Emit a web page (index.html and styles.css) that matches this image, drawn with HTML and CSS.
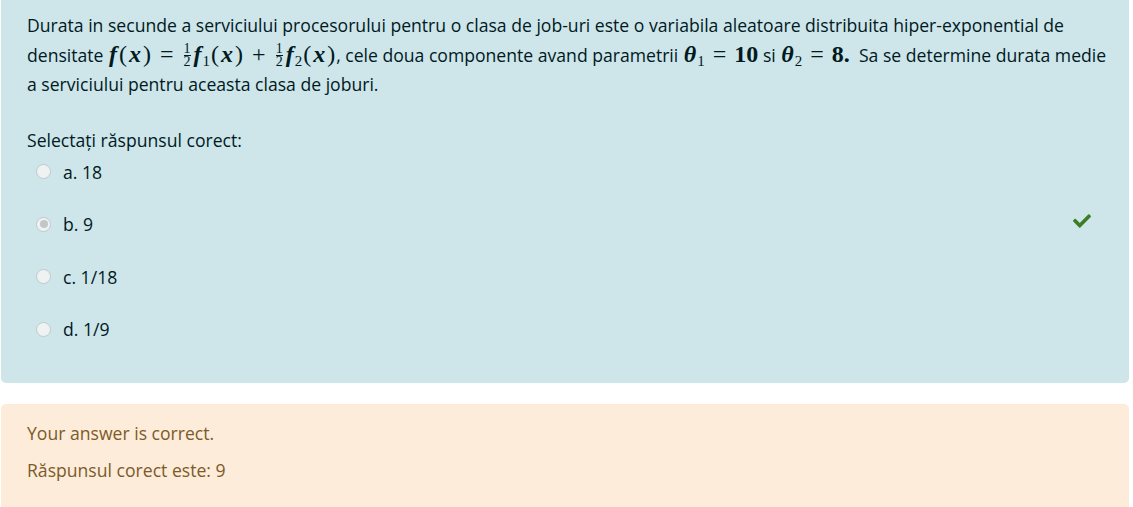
FILE: index.html
```html
<!DOCTYPE html>
<html lang="ro">
<head>
<meta charset="utf-8">
<title>Întrebare</title>
<link rel="stylesheet" href="styles.css">
</head>
<body>
<div class="que">
  <div class="formulation">
    <div class="qtext">
      Durata in secunde a serviciului procesorului pentru o clasa de job-uri este o variabila aleatoare distribuita hiper-exponential de densitate
      <span class="math"><i>f</i><span class="p">(</span><i>x</i><span class="p">)</span><span class="op">=</span><span class="frac"><span>1</span><span class="den">2</span></span><i>f</i><sub>1</sub><span class="p">(</span><i>x</i><span class="p">)</span><span class="op">+</span><span class="frac"><span>1</span><span class="den">2</span></span><i>f</i><sub>2</sub><span class="p">(</span><i>x</i><span class="p">)</span></span>, cele doua componente avand parametrii <span class="math"><i>θ</i><sub>1</sub><span class="op">=</span><b>10</b></span> si <span class="math"><i>θ</i><sub>2</sub><span class="op">=</span><b>8.</b></span>&nbsp; Sa se determine durata medie a serviciului pentru aceasta clasa de joburi.
    </div>
    <div class="ablock">
      <div class="prompt">Selectați răspunsul corect:</div>
      <div class="answer">
        <div class="option"><span class="radio"></span><span class="label">a. 18</span></div>
        <div class="option correct"><span class="radio checked"></span><span class="label">b. 9</span>
          <svg class="tick" viewBox="0 0 512 512" width="18" height="18"><path fill="#3d7d25" d="M173.9 439.4l-166.4-166.4c-10-10-10-26.2 0-36.2l36.2-36.2c10-10 26.2-10 36.2 0L192 312.7 432.1 72.6c10-10 26.2-10 36.2 0l36.2 36.2c10 10 10 26.2 0 36.2L210.1 439.4c-10 10-26.2 10-36.2 0z"/></svg>
        </div>
        <div class="option"><span class="radio"></span><span class="label">c. 1/18</span></div>
        <div class="option"><span class="radio"></span><span class="label">d. 1/9</span></div>
      </div>
    </div>
  </div>
  <div class="outcome">
    <div class="feedback">Your answer is correct.</div>
    <div class="rightanswer">Răspunsul corect este: 9</div>
  </div>
</div>
</body>
</html>
```
FILE: styles.css
```css
html, body {
  margin: 0;
  padding: 0;
  background: #ffffff;
}
body {
  font-family: "Open Sans", "Noto Sans", sans-serif;
  font-size: 17.6px;
  color: #001a1e;
}
.que {
  padding: 0 4px 0 1px;
}
.formulation {
  background: #cee5ea;
  border-radius: 0 0 5px 5px;
  padding: 11px 20px 22px 26px;
  height: 350px;
}
.qtext {
  line-height: 29.5px;
  margin-bottom: 28px;
}
.math {
  font-family: "Liberation Serif", "DejaVu Serif", serif;
  font-size: 24px;
  line-height: 1;
  white-space: nowrap;
}
.math i {
  font-style: italic;
  font-weight: bold;
  padding: 0 1px;
}
.math b {
  font-weight: bold;
}
.math .p {
  padding: 0 1px;
}
.math sub {
  font-size: 15px;
  vertical-align: -4px;
  line-height: 0;
}
.math .op {
  padding: 0 8px;
}
.frac {
  display: inline-flex;
  flex-direction: column;
  align-items: center;
  font-size: 14px;
  line-height: 12px;
  vertical-align: 9px;
  padding: 0 2px;
}
.frac .den {
  border-top: 1px solid #001a1e;
}
.prompt {
  margin-bottom: 9px;
}
.answer {
  display: flex;
  flex-direction: column;
}
.option {
  display: flex;
  align-items: center;
  height: 22px;
  margin-bottom: 30.5px;
  padding-left: 9px;
}
.radio {
  width: 13px;
  height: 13px;
  border-radius: 50%;
  border: 1px solid #bfcacc;
  background: #eef2f3;
  margin-right: 12px;
  display: flex;
  align-items: center;
  justify-content: center;
}
.radio.checked::after {
  content: "";
  width: 8px;
  height: 8px;
  border-radius: 50%;
  background: #c2c6c7;
}
.tick {
  margin-left: auto;
  margin-right: 18px;
  margin-bottom: 7px;
}
.outcome {
  margin-top: 21px;
  background: #fcecd9;
  color: #7d5a29;
  border-radius: 5px;
  padding: 17px 26px 28px 26px;
}
.feedback {
  margin-bottom: 13px;
}
```
